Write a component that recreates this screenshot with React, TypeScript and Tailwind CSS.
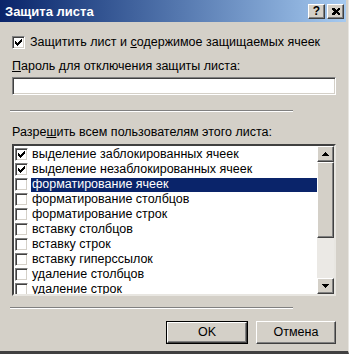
import React from "react";

const raised =
  "border border-t-white border-l-white border-b-[#404040] border-r-[#404040] shadow-[inset_-1px_-1px_0_#808080]";
const sunken =
  "border border-t-[#808080] border-l-[#808080] border-b-white border-r-white shadow-[inset_1px_1px_0_#404040,inset_-1px_-1px_0_#d4d0c8]";

const items = [
  { label: "выделение заблокированных ячеек", checked: true },
  { label: "выделение незаблокированных ячеек", checked: true },
  { label: "форматирование ячеек", checked: false, selected: true },
  { label: "форматирование столбцов", checked: false },
  { label: "форматирование строк", checked: false },
  { label: "вставку столбцов", checked: false },
  { label: "вставку строк", checked: false },
  { label: "вставку гиперссылок", checked: false },
  { label: "удаление столбцов", checked: false },
  { label: "удаление строк", checked: false },
];

const Check = () => (
  <svg width="7" height="7" viewBox="0 0 7 7" shapeRendering="crispEdges">
    <path
      d="M0 2h1v3h-1z M1 3h1v3h-1z M2 4h1v3h-1z M3 3h1v3h-1z M4 2h1v3h-1z M5 1h1v3h-1z M6 0h1v3h-1z"
      fill="#000"
    />
  </svg>
);

const CheckBox = ({ checked }: { checked: boolean }) => (
  <div className={`w-[13px] h-[13px] shrink-0 bg-white flex items-center justify-center ${sunken}`}>
    {checked && <Check />}
  </div>
);

const Arrow = ({ up }: { up?: boolean }) => (
  <svg width="7" height="4" viewBox="0 0 7 4" shapeRendering="crispEdges">
    <path d={up ? "M3 0h1v1h1v1h1v1h1v1h-7v-1h1v-1h1v-1h1z" : "M0 0h7v1h-1v1h-1v1h-1v1h-1v-1h-1v-1h-1v-1h-1z"} fill="#000" />
  </svg>
);

const Separator = () => <div className="ml-[10px] w-[283px] h-[2px] shrink-0 border-t border-t-[#808080] border-b border-b-white" />;

const App = () => {
  return (
    <div className="w-[349px] h-[354px] bg-[#d4d0c8] flex flex-col overflow-hidden whitespace-nowrap text-black font-['Liberation_Sans',Arial,sans-serif] text-[12.5px] leading-[15px] border-r border-r-[#e8e6e1] border-b-[3px] border-b-[#404040]">
      {/* Title bar */}
      <div className="h-[22px] shrink-0 mr-[2px] flex items-center justify-between bg-gradient-to-r from-[#0a246a] to-[#a6caf0] pl-[5px] pr-[2px]">
        <span className="text-white font-bold text-[13px]">Защита листа</span>
        <div className="flex gap-[2px]">
          <div className={`w-[17px] h-[15px] bg-[#d4d0c8] flex items-center justify-center font-bold text-[12px] leading-none ${raised}`}>?</div>
          <div className={`w-[17px] h-[15px] bg-[#d4d0c8] flex items-center justify-center ${raised}`}>
            <svg width="8" height="7" viewBox="0 0 8 7" shapeRendering="crispEdges">
              <path d="M0 0h2l2 2 2-2h2v1l-2 2.5 2 2.5v1h-2l-2-2-2 2h-2v-1l2-2.5-2-2.5z" fill="#000" />
            </svg>
          </div>
        </div>
      </div>

      {/* Protect checkbox */}
      <div className="mt-[13px] ml-[12px] h-[15px] shrink-0 flex items-center gap-[5px]">
        <CheckBox checked />
        <span>
          Защитить лист и <u>с</u>одержимое защищаемых ячеек
        </span>
      </div>

      {/* Password */}
      <div className="mt-[9px] ml-[12px] h-[15px] shrink-0">
        <u>П</u>ароль для отключения защиты листа:
      </div>
      <div className={`mt-[3px] ml-[12px] w-[324px] h-[18px] shrink-0 bg-white ${sunken}`} />

      <div className="mt-[15px] shrink-0">
        <Separator />
      </div>

      {/* Allow list */}
      <div className="mt-[13px] ml-[12px] h-[15px] shrink-0">
        Разре<u>ш</u>ить всем пользователям этого листа:
      </div>
      <div className="mt-[4px] ml-[12px] w-[324px] h-[152px] shrink-0 bg-white flex overflow-hidden border-[2px] border-t-[#404040] border-l-[#404040] border-b-[#e8e6e1] border-r-[#e8e6e1]">
        <div className="flex-1 flex flex-col pt-[1px] overflow-hidden">
          {items.map((it) => (
            <div key={it.label} className="h-[15px] shrink-0 flex items-center pl-[1px]">
              <CheckBox checked={it.checked} />
              <div
                className={`ml-[3px] flex-1 h-[14px] pl-[1px] flex items-center ${
                  it.selected ? "bg-[#0a246a] text-white" : ""
                }`}
              >
                {it.label}
              </div>
            </div>
          ))}
        </div>
        {/* Scrollbar */}
        <div className="w-[17px] flex flex-col bg-[#ebe9e5]">
          <div className={`h-[16px] bg-[#d4d0c8] flex items-center justify-center ${raised}`}>
            <Arrow up />
          </div>
          <div className={`h-[76px] bg-[#d4d0c8] ${raised}`} />
          <div className="flex-1" />
          <div className={`h-[16px] bg-[#d4d0c8] flex items-center justify-center ${raised}`}>
            <Arrow />
          </div>
        </div>
      </div>

      <div className="mt-[11px] shrink-0">
        <Separator />
      </div>

      {/* Buttons */}
      <div className="mt-[12px] flex justify-end gap-[8px] pr-[12px] shrink-0">
        <div className="w-[82px] h-[23px] border border-black">
          <div className={`w-full h-full bg-[#d4d0c8] flex items-center justify-center ${raised}`}>OK</div>
        </div>
        <div className={`w-[80px] h-[23px] bg-[#d4d0c8] flex items-center justify-center ${raised}`}>Отмена</div>
      </div>
    </div>
  );
};

export default App;
